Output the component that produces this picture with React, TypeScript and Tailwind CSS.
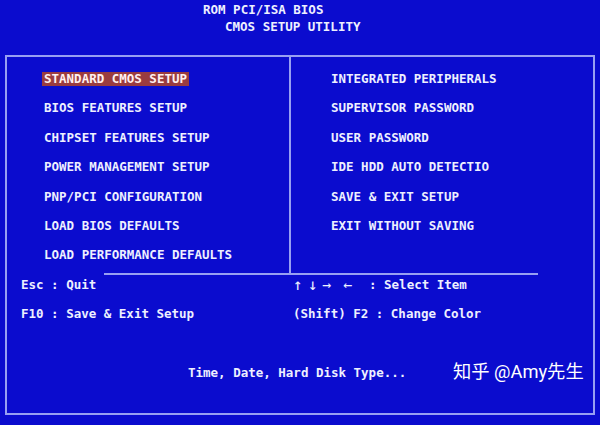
const leftItems = [
  'STANDARD CMOS SETUP',
  'BIOS FEATURES SETUP',
  'CHIPSET FEATURES SETUP',
  'POWER MANAGEMENT SETUP',
  'PNP/PCI CONFIGURATION',
  'LOAD BIOS DEFAULTS',
  'LOAD PERFORMANCE DEFAULTS',
];

const rightItems = [
  'INTEGRATED PERIPHERALS',
  'SUPERVISOR PASSWORD',
  'USER PASSWORD',
  'IDE HDD AUTO DETECTIO',
  'SAVE & EXIT SETUP',
  'EXIT WITHOUT SAVING',
];

export default function App() {
  const selected = 0;

  return (
    <div
      className="relative w-[600px] h-[425px] overflow-hidden bg-[#0b0cce] text-[#eef0ff] font-bold text-[12.5px] leading-[14px] whitespace-pre"
      style={{ fontFamily: '"DejaVu Sans Mono", "Liberation Mono", monospace' }}
    >
      {/* Title */}
      <div className="pt-[3px]">
        <div className="pl-[203px] h-[14px]">ROM PCI/ISA BIOS</div>
        <div className="pl-[225px] h-[14px] mt-[3px]">CMOS SETUP UTILITY</div>
      </div>

      {/* Main frame */}
      <div className="ml-[5px] mt-[21px] w-[590px] h-[360px] border-2 border-[#98a0f2]">
        <div className="flex h-[216px]">
          {/* Left column */}
          <div className="w-[284px] border-r-2 border-[#98a0f2] pt-[15px] pl-[35px] flex flex-col gap-[15.4px]">
            {leftItems.map((item, i) => (
              <div key={item} className="h-[14px] flex">
                <span className={i === selected ? 'bg-[#9a3c40] text-[#fff0f0] px-[2px]' : 'px-[2px]'}>
                  {item}
                </span>
              </div>
            ))}
          </div>

          {/* Right column */}
          <div className="flex-1 pt-[15px] pl-[40px] flex flex-col gap-[15.4px]">
            {rightItems.map((item) => (
              <div key={item} className="h-[14px]">
                {item}
              </div>
            ))}
          </div>
        </div>

        {/* Separator */}
        <div className="ml-[97px] w-[434px] h-[2px] bg-[#98a0f2]" />

        {/* Key help */}
        <div className="pt-[3px] pl-[14px] grid grid-cols-[272px_1fr] gap-y-[15px]">
          <div className="h-[14px]">Esc : Quit</div>
          <div className="h-[14px] flex items-center">
            <span className="inline-block w-[15px] text-[16px] font-normal">↑</span>
            <span className="inline-block w-[14px] text-[16px] font-normal">↓</span>
            <span className="inline-block w-[21px] text-[15px] font-normal">→</span>
            <span className="inline-block w-[26px] text-[15px] font-normal">←</span>
            <span>: Select Item</span>
          </div>
          <div className="h-[14px]">F10 : Save &amp; Exit Setup</div>
          <div className="h-[14px]">(Shift) F2 : Change Color</div>
        </div>

        <div className="mt-[45px] pl-[181px] h-[14px]">Time, Date, Hard Disk Type...</div>
      </div>

      {/* Watermark */}
      <div
        className="absolute left-[453px] top-[359px] text-[18.3px] leading-[26px] font-normal text-white"
        style={{ fontFamily: 'Roboto, "Noto Sans CJK SC", sans-serif' }}
      >
        知乎 @Amy先生
      </div>
    </div>
  );
}
